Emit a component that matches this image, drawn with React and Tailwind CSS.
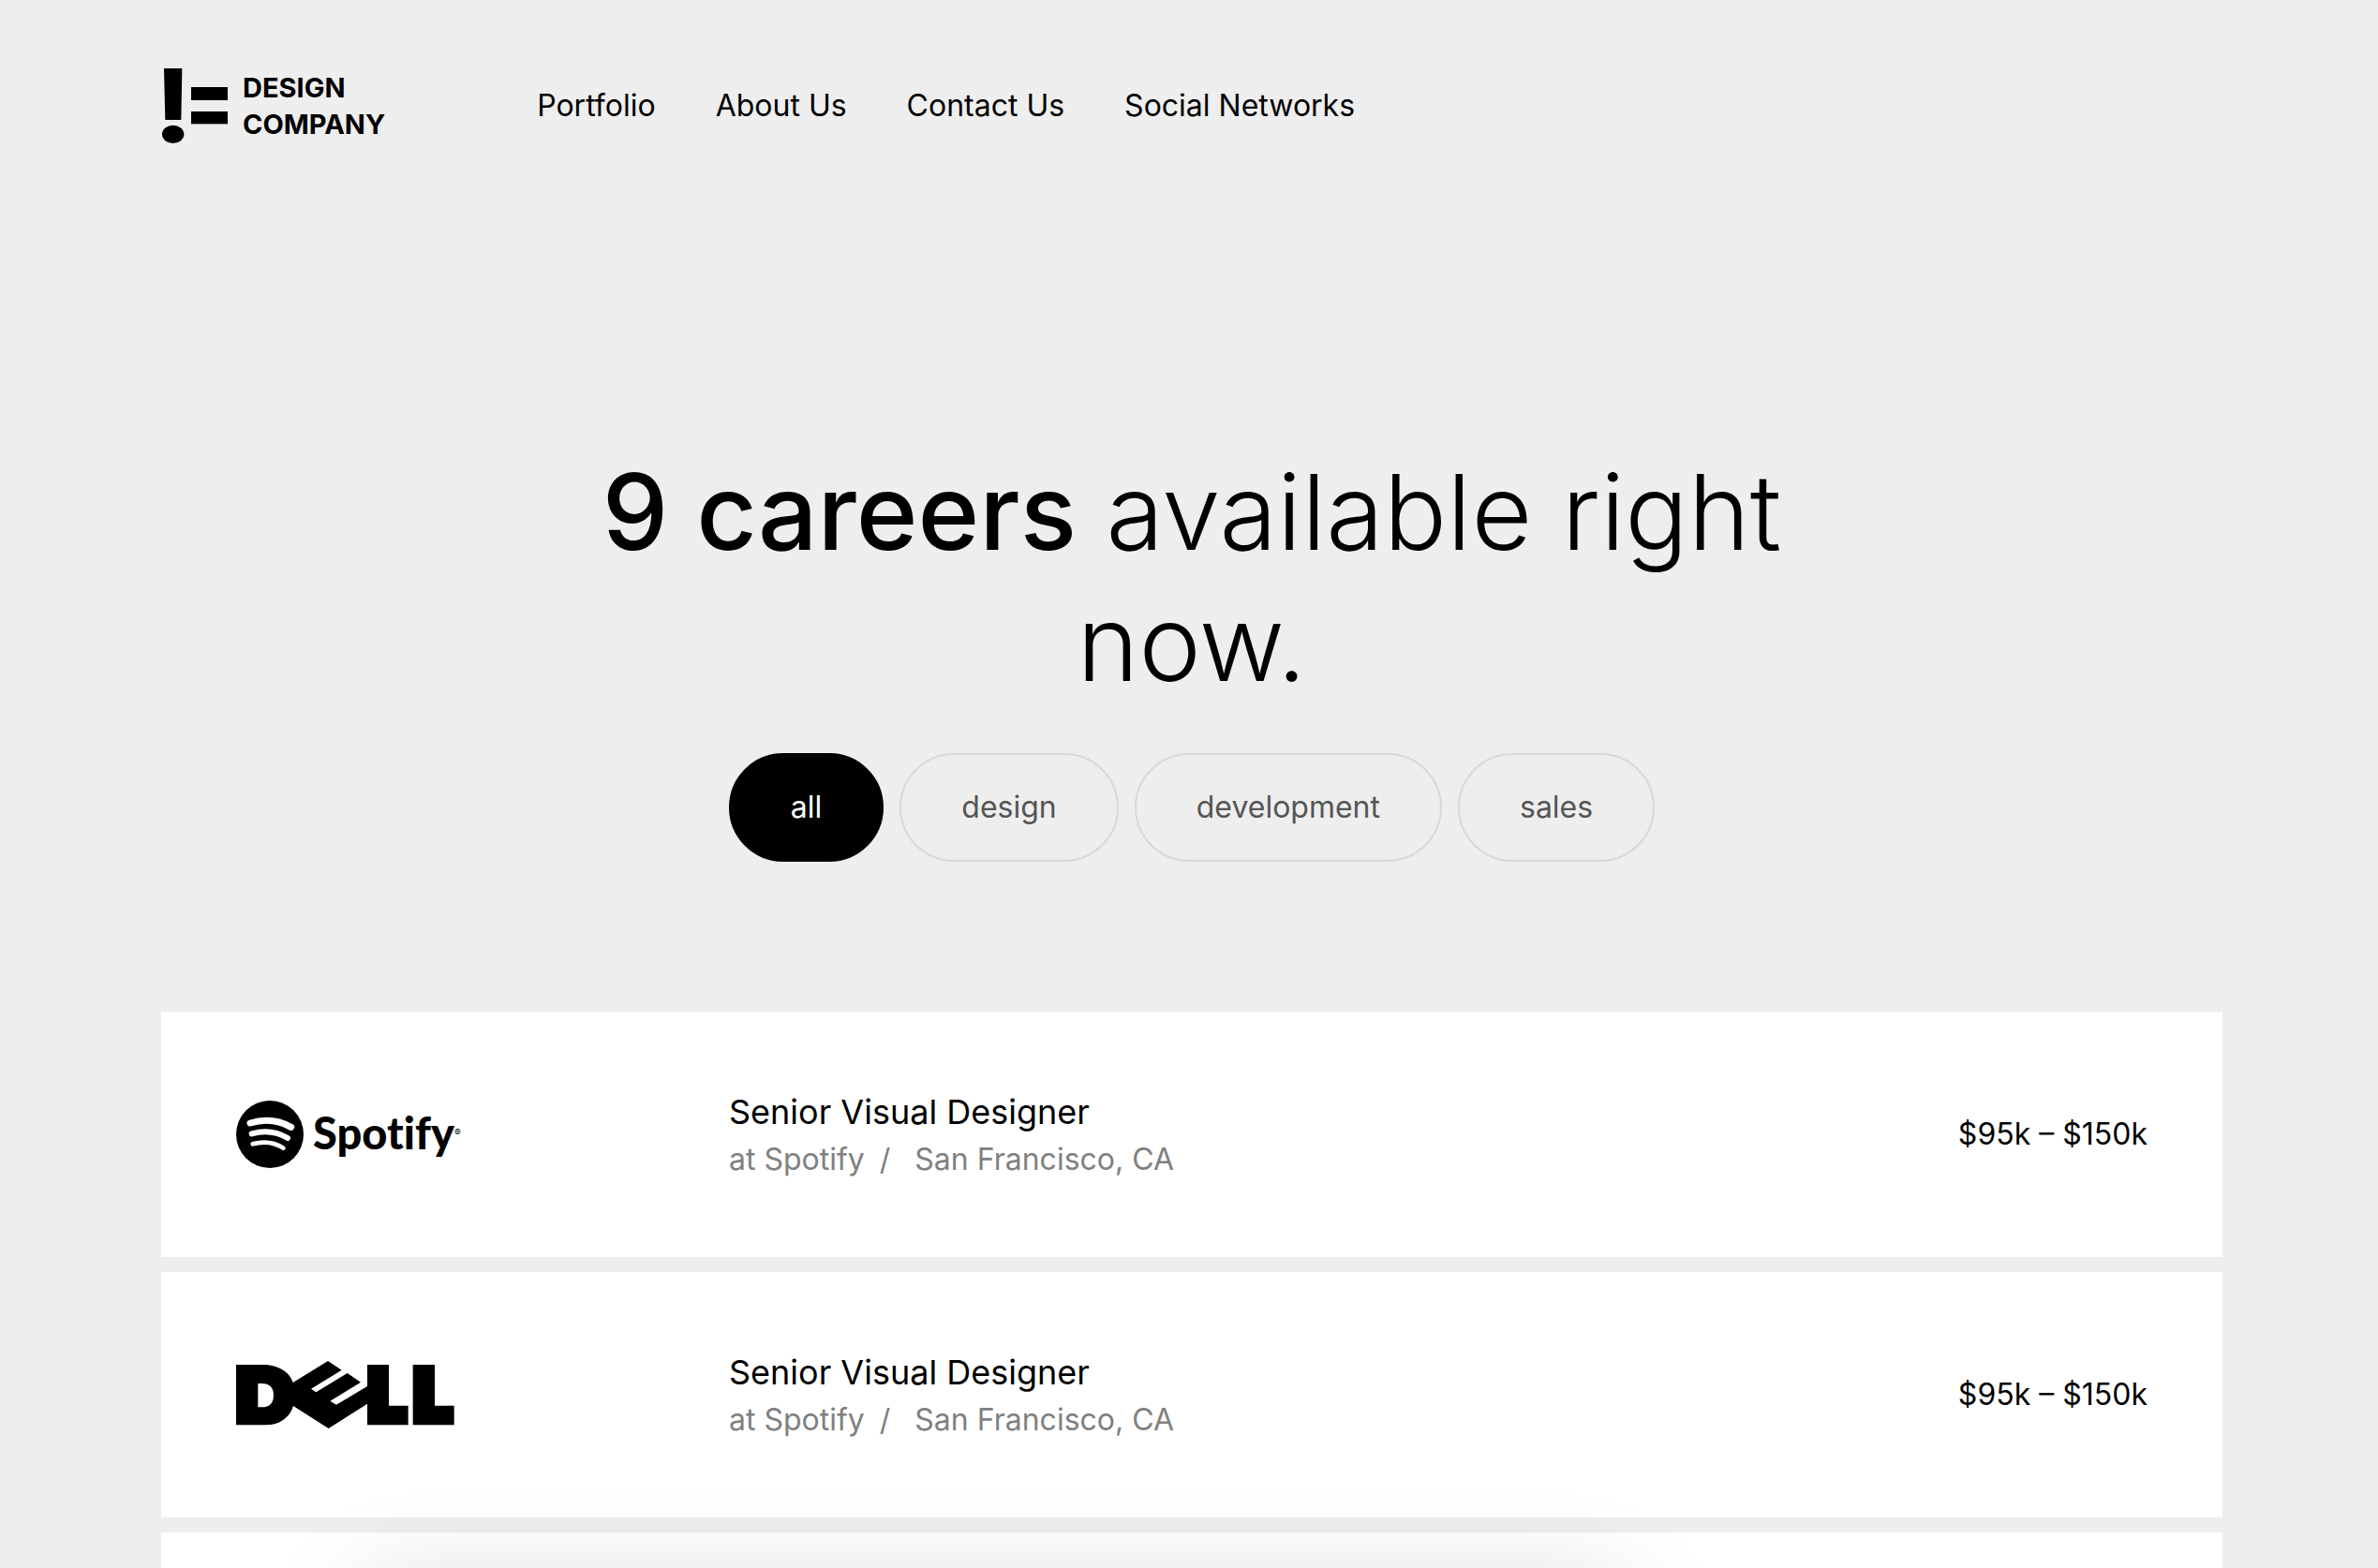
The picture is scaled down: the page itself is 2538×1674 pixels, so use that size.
import React, { useState } from "react";

const NAV = ["Portfolio", "About Us", "Contact Us", "Social Networks"];
const FILTERS = ["all", "design", "development", "sales"];

function CompanyMark() {
  return (
    <svg viewBox="66 69 213 240" className="h-20 w-[71px]" aria-hidden="true">
      <path d="M75 69H133L130 234H79Z" />
      <ellipse cx="104" cy="280" rx="35" ry="29" />
      <rect x="162" y="129" width="117" height="42" />
      <rect x="162" y="207" width="117" height="40" />
    </svg>
  );
}

function SpotifyLogo() {
  return (
    <div className="flex items-center gap-2.5">
      <svg viewBox="66 75 216 216" className="size-[72px]" aria-hidden="true">
        <circle cx="174" cy="183" r="108" />
        <g fill="none" stroke="#fff" strokeLinecap="round">
          <path d="M111 147C155 134 203 138 242 160" strokeWidth="21" />
          <path d="M116 181C154 170 196 174 231 195" strokeWidth="18" />
          <path d="M119 214C153 205 188 208 217 227" strokeWidth="14" />
        </g>
      </svg>
      <span className="flex items-center pb-1 font-['Lato',sans-serif] text-[47px] leading-[68px] font-black [font-variant-ligatures:none]">
        Spotify
        <span className="font-['Inter',sans-serif] text-[10px] leading-4 font-normal">®</span>
      </span>
    </div>
  );
}

function DellLogo() {
  return (
    <svg viewBox="66 69 699 216" className="h-[72px] w-[233px]" role="img" aria-label="Dell">
      <path
        fillRule="evenodd"
        d="M66 81H150C200 81 238 104 248 138L360 69L404 98L306 158L322 169L422 108L465 137L367 197L387 209L486 150V81H555V212H617V274H486V206L362 285L249 213C238 250 206 274 160 274H66ZM136 141V217H148C174 217 186 203 186 179C186 155 174 141 148 141Z"
      />
      <path d="M632 81H702V212H764V274H632Z" />
    </svg>
  );
}

const JOBS = [
  { logo: SpotifyLogo, title: "Senior Visual Designer", company: "at Spotify", place: "San Francisco, CA", pay: "$95k – $150k" },
  { logo: DellLogo, title: "Senior Visual Designer", company: "at Spotify", place: "San Francisco, CA", pay: "$95k – $150k" },
];

function JobCard({ job }) {
  const Logo = job.logo;
  return (
    <li className="flex min-h-[262px] items-center bg-white px-20">
      <div className="w-[526px] shrink-0">
        <Logo />
      </div>
      <div className="flex-1 pt-1">
        <h2 className="text-[36px] leading-[50px]">{job.title}</h2>
        <p className="flex leading-[52px] text-[#808080]">
          <span>{job.company}</span>
          <span className="mr-[26px] ml-4">/</span>
          <span>{job.place}</span>
        </p>
      </div>
      <p>{job.pay}</p>
    </li>
  );
}

export default function App() {
  const [active, setActive] = useState("all");
  return (
    <div className="relative flex min-h-screen flex-col overflow-hidden bg-[#eeeeee] pt-[73px] pr-[166px] pl-[172px] font-['Inter',sans-serif] text-[32px] leading-10 text-black">
      <header className="flex items-center">
        <a href="#home" className="flex items-center gap-4">
          <CompanyMark />
          <span className="text-[29px] leading-[39px] font-bold">
            DESIGN
            <br />
            COMPANY
          </span>
        </a>
        <nav className="ml-[162px] flex gap-16">
          {NAV.map((n) => (
            <a key={n} href="#nav">
              {n}
            </a>
          ))}
        </nav>
      </header>

      <main className="flex flex-1 flex-col pt-[323px]">
        <h1 className="mx-auto max-w-[1400px] text-center text-[112px] leading-[140px] font-light">
          <strong className="font-medium">9 careers</strong> available right now.
        </h1>

        <div className="mt-12 flex justify-center gap-[17px]">
          {FILTERS.map((f) => (
            <button
              key={f}
              type="button"
              onClick={() => setActive(f)}
              className={
                f === active
                  ? "rounded-full border-2 border-black bg-black px-16 py-9 text-white"
                  : "rounded-full border-2 border-[#d9d9d9] px-16 py-9 text-[#555555]"
              }
            >
              {f}
            </button>
          ))}
        </div>

        <ul className="mt-40 flex flex-1 flex-col gap-4">
          {JOBS.map((job, i) => (
            <JobCard key={i} job={job} />
          ))}
          <li className="flex-1 bg-white" />
        </ul>
      </main>

      <div className="pointer-events-none absolute top-full left-[390px] h-40 w-[1340px] translate-y-8 rounded-3xl shadow-[0_0_120px_rgba(0,0,0,0.2)]" />
    </div>
  );
}
